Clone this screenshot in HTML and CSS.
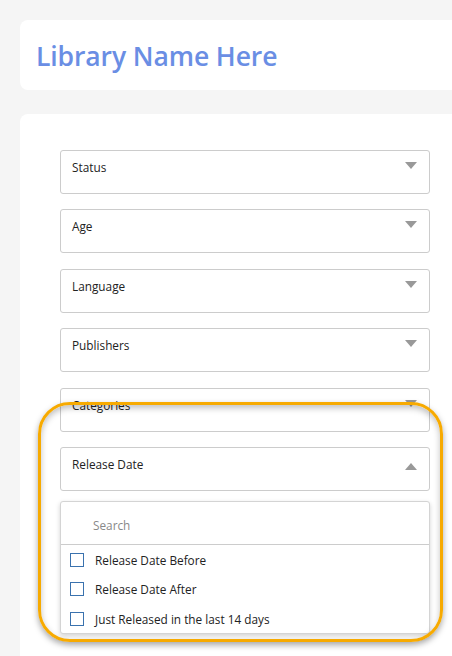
FILE: index.html
```html
<!DOCTYPE html>
<html>
<head>
<meta charset="utf-8">
<link rel="stylesheet" href="styles.css">
</head>
<body>
<div class="header-card">
  <h1 class="title">Library Name Here</h1>
</div>
<div class="main-card">
  <div class="filters">
    <div class="select"><span class="label">Status</span><span class="arrow down"></span></div>
    <div class="select"><span class="label">Age</span><span class="arrow down"></span></div>
    <div class="select"><span class="label">Language</span><span class="arrow down"></span></div>
    <div class="select"><span class="label">Publishers</span><span class="arrow down"></span></div>
    <div class="select"><span class="label">Categories</span><span class="arrow down"></span></div>
    <div class="select"><span class="label">Release Date</span><span class="arrow up"></span></div>
  </div>
  <div class="panel">
    <div class="search">Search</div>
    <div class="option"><span class="box"></span><span>Release Date Before</span></div>
    <div class="option"><span class="box"></span><span>Release Date After</span></div>
    <div class="option"><span class="box"></span><span>Just Released in the last 14 days</span></div>
  </div>
</div>
<div class="highlight"></div>
</body>
</html>
```
FILE: styles.css
```css
html, body {
  margin: 0;
  padding: 0;
}
body {
  background: #f5f5f5;
  font-family: "Open Sans", "Noto Sans", sans-serif;
  width: 452px;
  height: 656px;
  overflow: hidden;
  position: relative;
}
.header-card {
  margin: 20px 0 0 20px;
  height: 70px;
  background: #ffffff;
  border-radius: 8px 0 0 8px;
  display: flex;
  align-items: center;
  padding-left: 16px;
}
.title {
  margin: 2px 0 0 0;
  font-size: 26.5px;
  font-weight: 600;
  color: #6a8ee4;
  letter-spacing: -0.1px;
}
.main-card {
  margin: 24px 0 0 20px;
  background: #ffffff;
  border-radius: 8px 0 0 0;
  padding: 36px 22px 40px 40px;
}
.filters {
  display: flex;
  flex-direction: column;
  gap: 15.4px;
}
.select {
  box-sizing: border-box;
  height: 44px;
  border: 1px solid #cccccc;
  border-radius: 3px;
  display: flex;
  justify-content: space-between;
  align-items: flex-start;
  padding: 8px 12px 0 11px;
  font-size: 11.8px;
  line-height: 16px;
  color: #222;
}
.arrow {
  width: 0;
  height: 0;
  border-left: 6.5px solid transparent;
  border-right: 6.5px solid transparent;
  margin-top: 3px;
}
.arrow.down {
  border-top: 7px solid #999999;
}
.arrow.up {
  border-bottom: 7px solid #999999;
  margin-top: 7px;
}
.panel {
  margin-top: 10px;
  border: 1px solid #d4d4d4;
  border-radius: 3px;
  background: #fff;
  box-shadow: 0 2px 5px rgba(0,0,0,0.18);
}
.search {
  box-sizing: border-box;
  height: 43px;
  border-bottom: 1px solid #cccccc;
  display: flex;
  align-items: center;
  padding: 5px 0 0 32px;
  font-size: 11.8px;
  color: #888;
}
.option {
  height: 29.5px;
  display: flex;
  align-items: center;
  gap: 11px;
  padding-left: 9px;
  font-size: 11.8px;
  color: #222;
}
.box {
  box-sizing: border-box;
  width: 14px;
  height: 14px;
  border: 1.5px solid #3a72ae;
  background: #fff;
}
.highlight {
  position: absolute;
  left: 38px;
  top: 402px;
  width: 405px;
  height: 240px;
  box-sizing: border-box;
  border: 3px solid #f7aa00;
  border-radius: 32px;
  box-shadow: 0 3px 6px rgba(0,0,0,0.35), inset 0 3px 6px rgba(0,0,0,0.25);
  pointer-events: none;
}
```
